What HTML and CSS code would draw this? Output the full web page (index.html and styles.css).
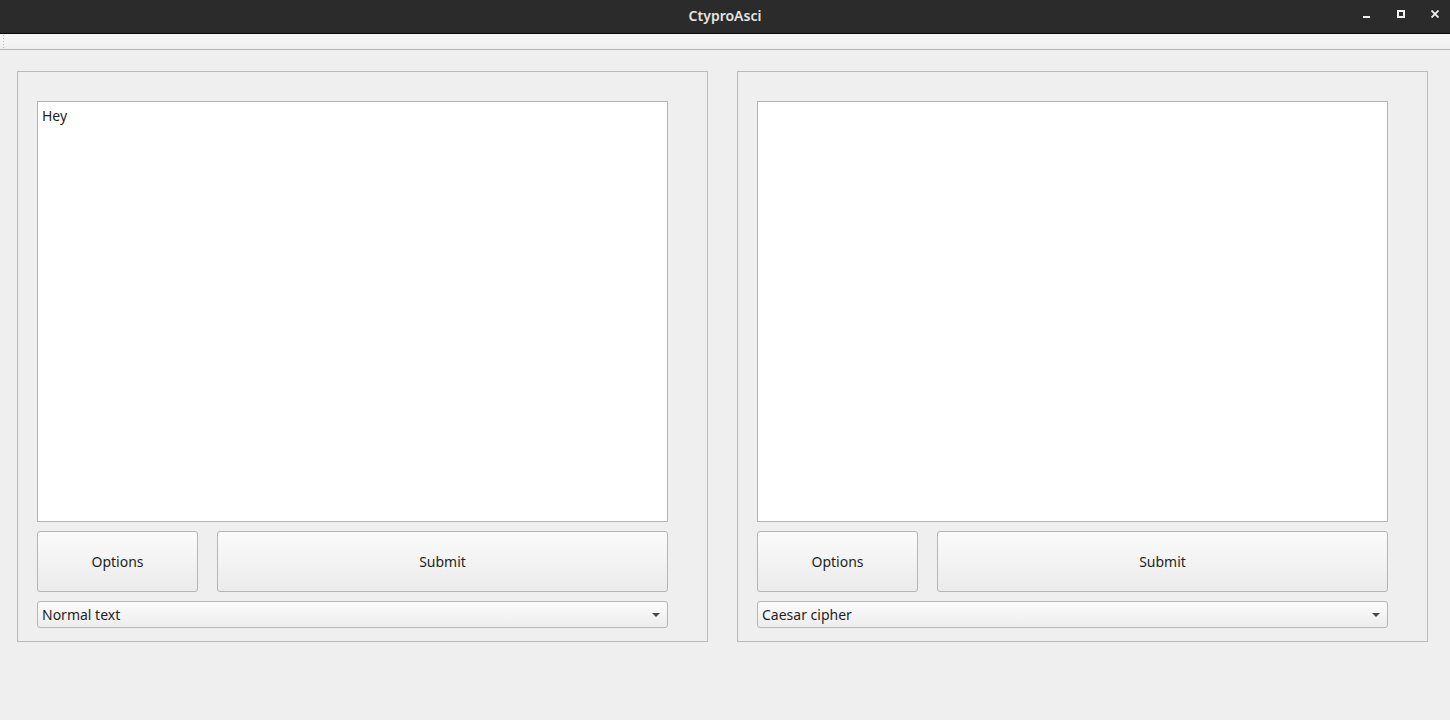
FILE: index.html
```html
<!DOCTYPE html>
<html>
<head>
<meta charset="utf-8">
<link rel="stylesheet" href="styles.css">
</head>
<body>
<div class="titlebar">
  <div class="title">CtyproAsci</div>
  <div class="controls">
    <svg class="ctl" width="8" height="8" viewBox="0 0 8 8"><rect x="0" y="6" width="7" height="2" fill="#f0f0f0"/></svg>
    <svg class="ctl" width="8" height="8" viewBox="0 0 8 8"><rect x="1" y="1" width="6" height="6" fill="none" stroke="#f0f0f0" stroke-width="2"/></svg>
    <svg class="ctl" width="8" height="8" viewBox="0 0 8 8"><path d="M0.5 0.5 L7.5 7.5 M7.5 0.5 L0.5 7.5" stroke="#f0f0f0" stroke-width="1.8"/></svg>
  </div>
</div>
<div class="toolbar"><div class="grip"></div></div>
<div class="main">
  <div class="group">
    <div class="textedit">Hey</div>
    <div class="buttons">
      <button class="btn opt">Options</button>
      <button class="btn sub">Submit</button>
    </div>
    <div class="combo"><span>Normal text</span><span class="arrow"></span></div>
  </div>
  <div class="group">
    <div class="textedit"></div>
    <div class="buttons">
      <button class="btn opt">Options</button>
      <button class="btn sub">Submit</button>
    </div>
    <div class="combo"><span>Caesar cipher</span><span class="arrow"></span></div>
  </div>
</div>
</body>
</html>
```
FILE: styles.css
```css
* { box-sizing: border-box; }
html, body { margin: 0; padding: 0; }
body {
  width: 1450px;
  height: 720px;
  background: #efefef;
  font-family: "Noto Sans", "Open Sans", sans-serif;
  font-size: 14px;
  color: #1f1f1f;
  overflow: hidden;
}
.titlebar {
  height: 34px;
  background: #2b2b2b;
  border-bottom: 1px solid #0a0a0a;
  display: flex;
  align-items: center;
  justify-content: center;
  position: relative;
}
.title {
  color: #e4e4e4;
  font-weight: 600;
  font-size: 14px;
  margin-top: -3px;
}
.controls {
  position: absolute;
  left: 1363px;
  top: 10px;
  display: flex;
  gap: 26px;
}
.ctl { display: block; }
.toolbar {
  height: 16px;
  background: linear-gradient(#f7f7f7, #f0f0f0);
  border-bottom: 1px solid #b4b4b4;
  padding: 0 0 0 2px;
}
.grip {
  width: 4px;
  height: 15px;
  background-image: radial-gradient(circle, #b8b8b8 0.8px, transparent 1px);
  background-size: 3px 3px;
}
.main {
  display: flex;
  gap: 29px;
  padding: 21px 0 0 17px;
}
.group {
  width: 691px;
  height: 571px;
  border: 1px solid #bababa;
  padding: 29px 0 0 19px;
  display: flex;
  flex-direction: column;
  gap: 9px;
}
.textedit {
  width: 631px;
  height: 421px;
  background: #fff;
  border: 1px solid #b3b3b3;
  padding: 4px 4px;
  line-height: 20px;
}
.buttons {
  display: flex;
  gap: 19px;
  width: 631px;
}
.btn {
  height: 61px;
  border: 1px solid #b5b5b5;
  border-radius: 3px;
  background: linear-gradient(#fbfbfb, #ebebeb);
  font-family: inherit;
  font-size: 14px;
  color: #1f1f1f;
  padding: 0;
}
.opt { width: 161px; }
.sub { width: 451px; }
.combo {
  width: 631px;
  height: 27px;
  border: 1px solid #b5b5b5;
  border-radius: 3px;
  background: linear-gradient(#fbfbfb, #ededed);
  display: flex;
  align-items: center;
  justify-content: space-between;
  padding: 0 7px 0 4px;
}
.arrow {
  width: 0;
  height: 0;
  border-left: 4px solid transparent;
  border-right: 4px solid transparent;
  border-top: 4px solid #4a4a4a;
  margin-top: 1px;
}
```
